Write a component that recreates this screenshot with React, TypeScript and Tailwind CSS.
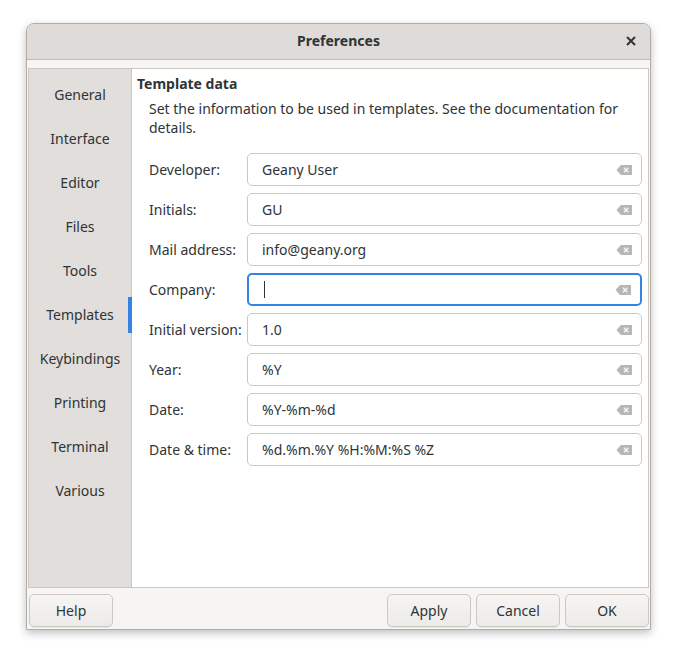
import { useState } from "react";

const sections = [
  "General",
  "Interface",
  "Editor",
  "Files",
  "Tools",
  "Templates",
  "Keybindings",
  "Printing",
  "Terminal",
  "Various",
];

const fields = [
  { label: "Developer:", value: "Geany User" },
  { label: "Initials:", value: "GU" },
  { label: "Mail address:", value: "info@geany.org" },
  { label: "Company:", value: "", focused: true },
  { label: "Initial version:", value: "1.0" },
  { label: "Year:", value: "%Y" },
  { label: "Date:", value: "%Y-%m-%d" },
  { label: "Date & time:", value: "%d.%m.%Y %H:%M:%S %Z" },
];

function ClearIcon() {
  return (
    <svg width="17" height="12" viewBox="0 0 17 12" className="shrink-0">
      <path d="M0.5 6 L5 1 H16 V11 H5 Z" fill="#b8b6b3" />
      <path d="M8 3.8 L12.4 8.2 M12.4 3.8 L8 8.2" stroke="#f4f3f2" strokeWidth="1.6" />
    </svg>
  );
}

function Entry({ value, focused }: { value: string; focused?: boolean }) {
  return (
    <div
      className={`flex h-[33px] w-[395px] items-center rounded-[5px] bg-white pl-[14px] pr-[8px] ${
        focused ? "border-2 border-[#3584e4] pl-[13px] pr-[7px]" : "border border-[#cdc7c2]"
      }`}
    >
      <div className="flex flex-1 items-center">
        {focused && <div className="ml-[1px] h-[17px] w-[1px] bg-[#2e3436]" />}
        <span>{value}</span>
      </div>
      <ClearIcon />
    </div>
  );
}

function Button({ label }: { label: string }) {
  return (
    <div className="flex h-[33px] w-[84px] items-center justify-center rounded-[5px] border border-[#cdc7c2] bg-gradient-to-b from-[#f6f5f4] to-[#edebe9] text-[#2e3436] shadow-[0_1px_0_rgba(0,0,0,0.05)]">
      {label}
    </div>
  );
}

export default function App() {
  const [selected] = useState("Templates");

  return (
    <div
      className="h-[659px] w-[677px] bg-white pl-[26px] pt-[23px] text-[14px] text-[#2e3436]"
      style={{ fontFamily: '"Noto Sans", "Open Sans", sans-serif' }}
    >
      <div className="flex h-[607px] w-[625px] flex-col overflow-hidden rounded-t-[8px] border border-[#b2aca6] bg-[#f6f5f4] shadow-[0_3px_9px_rgba(0,0,0,0.25)]">
        {/* title bar */}
        <div className="relative flex h-[36px] shrink-0 items-center justify-center border-b border-[#c0bbb6] bg-[#dedbd8] pb-[2px]">
          <span className="font-bold text-[#2e3436]">Preferences</span>
          <svg
            width="10"
            height="10"
            viewBox="0 0 10 10"
            className="absolute right-[14px] top-[12px]"
          >
            <path d="M1 1 L9 9 M9 1 L1 9" stroke="#2e3436" strokeWidth="2" />
          </svg>
        </div>

        {/* body */}
        <div className="flex flex-1 flex-col px-[1px] pt-[8px]">
          <div className="flex h-[520px] border border-[#cdc7c2] bg-white">
            <div className="flex w-[103px] shrink-0 flex-col border-r border-[#cdc7c2] bg-[#e1dedb] pt-[3px]">
              {sections.map((s) => (
                <div key={s} className="relative flex h-[44px] items-center justify-center">
                  <span>{s}</span>
                  {s === selected && (
                    <div className="absolute right-[-1px] top-[5px] h-[36px] w-[4px] bg-[#3584e4]" />
                  )}
                </div>
              ))}
            </div>

            <div className="flex flex-1 flex-col pl-[5px] pt-[5px]">
              <div className="font-bold leading-[19px]">Template data</div>
              <p className="mt-[6px] w-[495px] pl-[12px] leading-[19px]">
                Set the information to be used in templates. See the documentation for details.
              </p>
              <div className="mt-[16px] flex flex-col gap-[7px] pl-[12px]">
                {fields.map((f) => (
                  <div key={f.label} className="flex items-center">
                    <span className="w-[98px] shrink-0">{f.label}</span>
                    <Entry value={f.value} focused={f.focused} />
                  </div>
                ))}
              </div>
            </div>
          </div>

          <div className="mt-[6px] flex items-center gap-[5px] pl-[1px]">
            <Button label="Help" />
            <div className="flex-1" />
            <Button label="Apply" />
            <Button label="Cancel" />
            <Button label="OK" />
          </div>
        </div>
      </div>
    </div>
  );
}
